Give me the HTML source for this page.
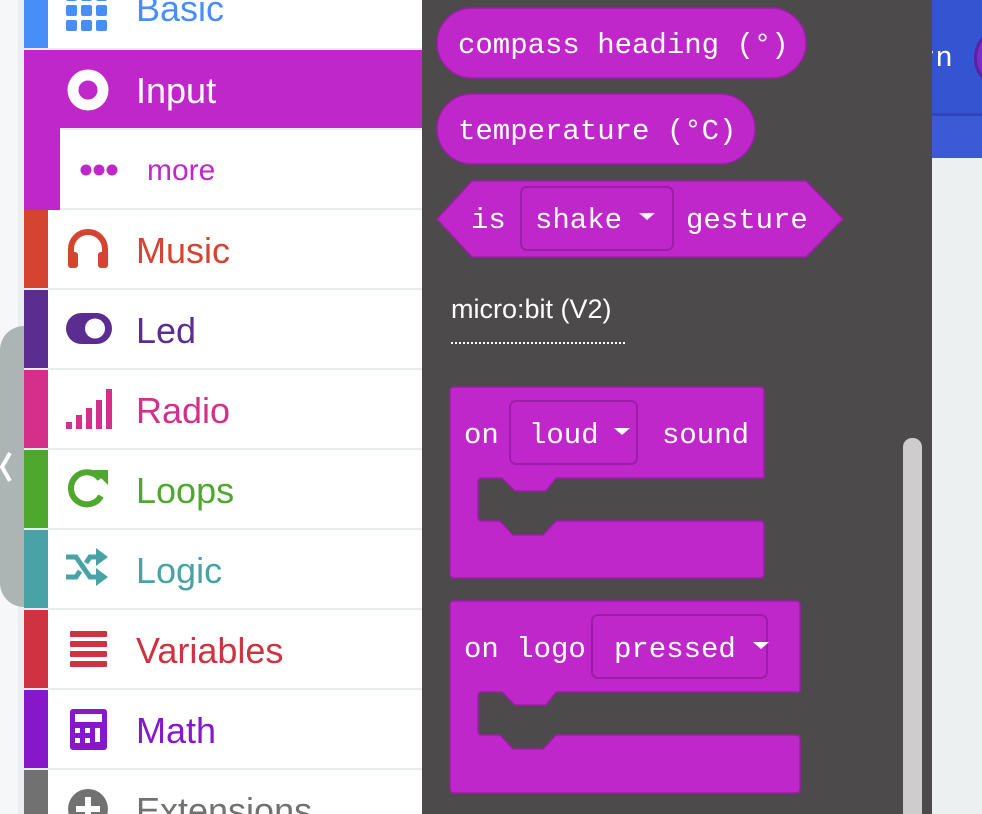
<!DOCTYPE html>
<html><head><meta charset="utf-8"><style>
*{margin:0;padding:0;box-sizing:border-box}
html,body{width:982px;height:814px;overflow:hidden}
body{position:relative;background:#ecf0f1;font-family:"Liberation Sans",sans-serif}
.abs{position:absolute}
.row{position:absolute;left:24px;width:398px;height:78px;background:#fff}
.row .bar{position:absolute;left:0;top:0;width:24px;height:100%}
.row .lbl{position:absolute;left:112px;top:2px;line-height:78px;font-size:36px}
.row svg{position:absolute;left:42px;top:17px}
</style></head><body>
<div class="abs" style="left:0;top:0;width:18px;height:814px;background:#f6f7f9"></div>
<div class="abs" style="left:18px;top:0;width:6px;height:814px;background:#eceff1"></div>
<div class="abs" style="left:24px;top:0;width:398px;height:814px;background:#e9eded"></div>

<div class="row" style="top:-30px;height:78px"><div class="bar" style="background:#478ef8"></div>
<div class="lbl" style="color:#478ef8;top:0px">Basic</div>
<svg width="44" height="44" viewBox="0 0 44 44" style="top:20px"><g fill="#478ef8">
<rect x="0" y="0" width="11" height="11" rx="2"/><rect x="15" y="0" width="11" height="11" rx="2"/><rect x="30" y="0" width="11" height="11" rx="2"/>
<rect x="0" y="15" width="11" height="11" rx="2"/><rect x="15" y="15" width="11" height="11" rx="2"/><rect x="30" y="15" width="11" height="11" rx="2"/>
<rect x="0" y="30" width="11" height="11" rx="2"/><rect x="15" y="30" width="11" height="11" rx="2"/><rect x="30" y="30" width="11" height="11" rx="2"/></g></svg></div>
<div class="row" style="top:50px;background:#c027cb"><div class="lbl" style="color:#fff">Input</div>
<svg width="44" height="44" viewBox="0 0 44 44"><circle cx="22" cy="23" r="15" fill="none" stroke="#fff" stroke-width="11"/></svg></div>
<div class="abs" style="left:24px;top:128px;width:24px;height:82px;background:#c027cb"></div>
<div class="abs" style="left:48px;top:128px;width:12px;height:82px;background:#c027cb"></div>
<div class="abs" style="left:60px;top:130px;width:362px;height:78px;background:#fff"></div>
<div class="abs" style="left:147px;top:132px;line-height:78px;font-size:30px;color:#c027cb">more</div>
<svg class="abs" style="left:79px;top:163px" width="42" height="14"><g fill="#c027cb"><circle cx="7" cy="7" r="5.5"/><circle cx="20" cy="7" r="5.5"/><circle cx="33" cy="7" r="5.5"/></g></svg>
<div class="row" style="top:210px"><div class="bar" style="background:#d54331"></div><div class="lbl" style="color:#d54331">Music</div>
<svg width="44" height="44" viewBox="0 0 44 44"><path d="M5 37 V22 A17 17 0 0 1 39 22 V37" fill="none" stroke="#d54331" stroke-width="6"/><rect x="2" y="25" width="10" height="16" rx="3" fill="#d54331"/><rect x="32" y="25" width="10" height="16" rx="3" fill="#d54331"/></svg></div>
<div class="row" style="top:290px"><div class="bar" style="background:#5c2d91"></div><div class="lbl" style="color:#5c2d91">Led</div>
<svg width="48" height="44" viewBox="0 0 48 44"><rect x="0" y="6" width="46" height="31" rx="15.5" fill="#5c2d91"/><circle cx="29" cy="21.5" r="10" fill="#fff"/></svg></div>
<div class="row" style="top:370px"><div class="bar" style="background:#d42f8b"></div><div class="lbl" style="color:#d42f8b">Radio</div>
<svg width="48" height="44" viewBox="0 0 48 44"><g fill="#d42f8b"><rect x="0" y="35" width="6" height="7"/><rect x="10" y="28" width="6" height="14"/><rect x="20" y="21" width="6" height="21"/><rect x="30" y="13" width="6" height="29"/><rect x="40" y="2" width="6" height="40"/></g></svg></div>
<div class="row" style="top:450px"><div class="bar" style="background:#4ea82e"></div><div class="lbl" style="color:#4ea82e">Loops</div>
<svg width="44" height="44" viewBox="0 0 44 44"><path d="M35 29 A16 16 0 1 1 34 12" fill="none" stroke="#4ea82e" stroke-width="6"/><path d="M27 3 H42 V18 Z" fill="#4ea82e"/></svg></div>
<div class="row" style="top:530px"><div class="bar" style="background:#49a3a6"></div><div class="lbl" style="color:#49a3a6">Logic</div>
<svg width="44" height="44" viewBox="0 0 44 44"><g stroke="#49a3a6" stroke-width="5" fill="none"><path d="M0 10 H10 L24 30 H34"/><path d="M0 30 H10 L14 24"/><path d="M20 16 L24 10 H34"/></g><path d="M30 1 L42 10 L30 19Z M30 21 L42 30 L30 39Z" fill="#49a3a6"/></svg></div>
<div class="row" style="top:610px"><div class="bar" style="background:#cf3240"></div><div class="lbl" style="color:#cf3240">Variables</div>
<svg width="44" height="44" viewBox="0 0 44 44"><g fill="#cf3240"><rect x="4" y="4" width="37" height="6" rx="1"/><rect x="4" y="14" width="37" height="6" rx="1"/><rect x="4" y="24" width="37" height="6" rx="1"/><rect x="4" y="34" width="37" height="6" rx="1"/></g></svg></div>
<div class="row" style="top:690px"><div class="bar" style="background:#8718c9"></div><div class="lbl" style="color:#8718c9">Math</div>
<svg width="44" height="44" viewBox="0 0 44 44"><rect x="4" y="2" width="37" height="41" rx="3" fill="#8718c9"/><rect x="9" y="7" width="27" height="8" fill="#fff"/><g fill="#fff"><rect x="9" y="21" width="5" height="5"/><rect x="19" y="21" width="5" height="5"/><rect x="29" y="21" width="5" height="14"/><rect x="9" y="31" width="5" height="5"/><rect x="19" y="31" width="5" height="5"/></g></svg></div>
<div class="row" style="top:770px"><div class="bar" style="background:#717171"></div><div class="lbl" style="color:#717171">Extensions</div>
<svg width="44" height="44" viewBox="0 0 44 44"><circle cx="22" cy="22" r="20" fill="#717171"/><path d="M22 10V34M10 22H34" stroke="#fff" stroke-width="6"/></svg></div>

<div class="abs" style="left:0;top:326px;width:24px;height:281px;background:#acb4b4;border-radius:24px 0 0 24px"></div>
<svg class="abs" style="left:0;top:450px" width="14" height="34"><path d="M10 3 L2 17 L10 31" stroke="#fff" stroke-width="4" fill="none"/></svg>

<div class="abs" style="left:932px;top:0;width:50px;height:113px;background:#3454d1"></div>
<div class="abs" style="left:932px;top:113px;width:50px;height:3px;background:#2d47b8"></div>
<div class="abs" style="left:932px;top:116px;width:50px;height:42px;background:#3c5ad6"></div>
<div class="abs" style="left:918px;top:42px;font-family:'Liberation Mono',monospace;font-size:29px;color:#fff">rn</div>
<div class="abs" style="left:974px;top:26px;width:64px;height:64px;border-radius:50%;background:#7a2cc6;border:3px solid #5b21a0"></div>

<div class="abs" style="left:422px;top:0;width:510px;height:814px;background:#4c4a4b"></div>
<svg class="abs" style="left:0;top:0" width="982" height="814" font-family="Liberation Mono, monospace" font-size="29" fill="#fff">
<g fill="#c027cb" stroke="#9c1ea8" stroke-width="1.5">
<rect x="437" y="8" width="369" height="70" rx="35"/>
<rect x="437" y="94" width="318" height="70" rx="35"/>
<path d="M472 181 H806 L843 219 L806 257 H472 L437 219 Z"/>
<path d="M454 387 H760 Q764 387 764 391 V478 H556 L546 491 H515 L502 478 H482 Q478 478 478 482 V517 Q478 521 482 521 H500 L513 535 H543 L556 521 H760 Q764 521 764 525 V574 Q764 578 760 578 H454 Q450 578 450 574 V391 Q450 387 454 387Z"/>
<path d="M454 601 H796 Q800 601 800 605 V692 H556 L546 705 H515 L502 692 H482 Q478 692 478 696 V731 Q478 735 482 735 H500 L513 749 H543 L556 735 H796 Q800 735 800 739 V789 Q800 793 796 793 H454 Q450 793 450 789 V605 Q450 601 454 601Z"/>
</g>
<g fill="none" stroke="#9c1ea8" stroke-width="2">
<rect x="521" y="187" width="152" height="63" rx="6"/>
<rect x="510" y="401" width="127" height="63" rx="6"/>
<rect x="592" y="615" width="175" height="63" rx="6"/>
</g>
<text x="458" y="53">compass heading (°)</text>
<text x="458" y="139">temperature (°C)</text>
<text x="471" y="228">is</text><text x="535" y="228">shake</text><text x="686" y="228">gesture</text>
<text x="464" y="443">on</text><text x="529" y="443">loud</text><text x="662" y="443">sound</text>
<text x="464" y="657">on logo</text><text x="614" y="657">pressed</text>
<g fill="#fff"><path d="M639 213 H655 L647 220Z"/><path d="M614 428 H630 L622 435Z"/><path d="M753 642 H769 L761 649Z"/></g>
<text x="451" y="318" font-family="Liberation Sans, sans-serif" font-size="27">micro:bit (V2)</text>
<line x1="451" y1="343" x2="626" y2="343" stroke="#fff" stroke-width="2" stroke-dasharray="2,2"/>
</svg>
<div class="abs" style="left:903px;top:438px;width:19px;height:390px;background:#cdcdcd;border-radius:9px"></div>
</body></html>
